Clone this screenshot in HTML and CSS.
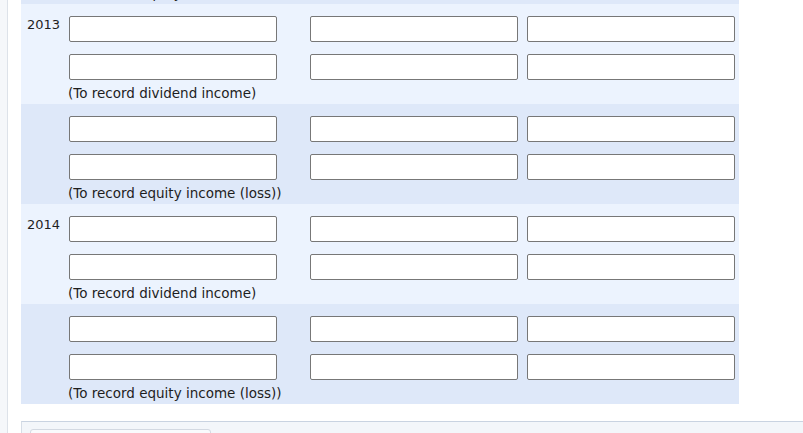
FILE: index.html
```html
<!DOCTYPE html>
<html>
<head>
<meta charset="utf-8">
<link rel="stylesheet" href="styles.css">
</head>
<body>
<div class="page">
  <div class="rail"></div>
  <div class="main">
    <div class="journal">
      <div class="entry dark">
        <div class="line"><span class="year"></span><input class="acct"><input class="amt dr"><input class="amt cr"></div>
        <div class="line"><span class="year"></span><input class="acct"><input class="amt dr"><input class="amt cr"></div>
        <div class="memo">(To record equity income (loss))</div>
      </div>
      <div class="entry light">
        <div class="line"><span class="year">2013</span><input class="acct"><input class="amt dr"><input class="amt cr"></div>
        <div class="line"><span class="year"></span><input class="acct"><input class="amt dr"><input class="amt cr"></div>
        <div class="memo">(To record dividend income)</div>
      </div>
      <div class="entry dark">
        <div class="line"><span class="year"></span><input class="acct"><input class="amt dr"><input class="amt cr"></div>
        <div class="line"><span class="year"></span><input class="acct"><input class="amt dr"><input class="amt cr"></div>
        <div class="memo">(To record equity income (loss))</div>
      </div>
      <div class="entry light">
        <div class="line"><span class="year">2014</span><input class="acct"><input class="amt dr"><input class="amt cr"></div>
        <div class="line"><span class="year"></span><input class="acct"><input class="amt dr"><input class="amt cr"></div>
        <div class="memo">(To record dividend income)</div>
      </div>
      <div class="entry dark">
        <div class="line"><span class="year"></span><input class="acct"><input class="amt dr"><input class="amt cr"></div>
        <div class="line"><span class="year"></span><input class="acct"><input class="amt dr"><input class="amt cr"></div>
        <div class="memo">(To record equity income (loss))</div>
      </div>
    </div>
    <div class="footer">
      <div class="btn"></div>
    </div>
  </div>
</div>
</body>
</html>
```
FILE: styles.css
```css
html, body {
  margin: 0;
  padding: 0;
  background: #ffffff;
  overflow: hidden;
}
body {
  font-family: "DejaVu Sans", sans-serif;
  font-size: 13.5px;
  color: #1e1e1e;
}
.page {
  display: flex;
  height: 433px;
}
.rail {
  width: 7px;
  flex: none;
  background: #f5f7fa;
  border-right: 1px solid #dde2e9;
}
.main {
  flex: 1;
  padding-left: 13px;
  overflow: hidden;
}
.journal {
  width: 718px;
  margin-top: -96px;
}
.entry {
  display: flex;
  flex-direction: column;
  gap: 12px;
  padding: 12px 0 4px;
  height: 100px;
  box-sizing: border-box;
}
.entry.light { background: #ecf3fe; }
.entry.dark { background: #dee8f9; }
.line {
  display: flex;
  height: 26px;
}
.year {
  width: 42px;
  padding-left: 6px;
  padding-top: 1px;
  line-height: 16px;
  font-size: 13px;
  flex: none;
}
input {
  box-sizing: border-box;
  width: 208px;
  height: 26px;
  margin: 0;
  padding: 0;
  border: 1px solid #777777;
  border-radius: 2px;
  background: #ffffff;
  flex: none;
}
.dr { margin-left: 33px; }
.cr { margin-left: 9px; }
.memo {
  margin-top: -8px;
  padding-left: 47px;
  line-height: 19px;
}
.footer {
  margin-top: 17px;
  border-top: 1px solid #c9d3e1;
  border-left: 1px solid #d6dde7;
  background: #f3f6fa;
  height: 40px;
  padding: 7px 0 0 8px;
}
.btn {
  width: 179px;
  height: 30px;
  border: 1px solid #d3d9e2;
  border-radius: 3px;
  background: #f9fafc;
}
```
